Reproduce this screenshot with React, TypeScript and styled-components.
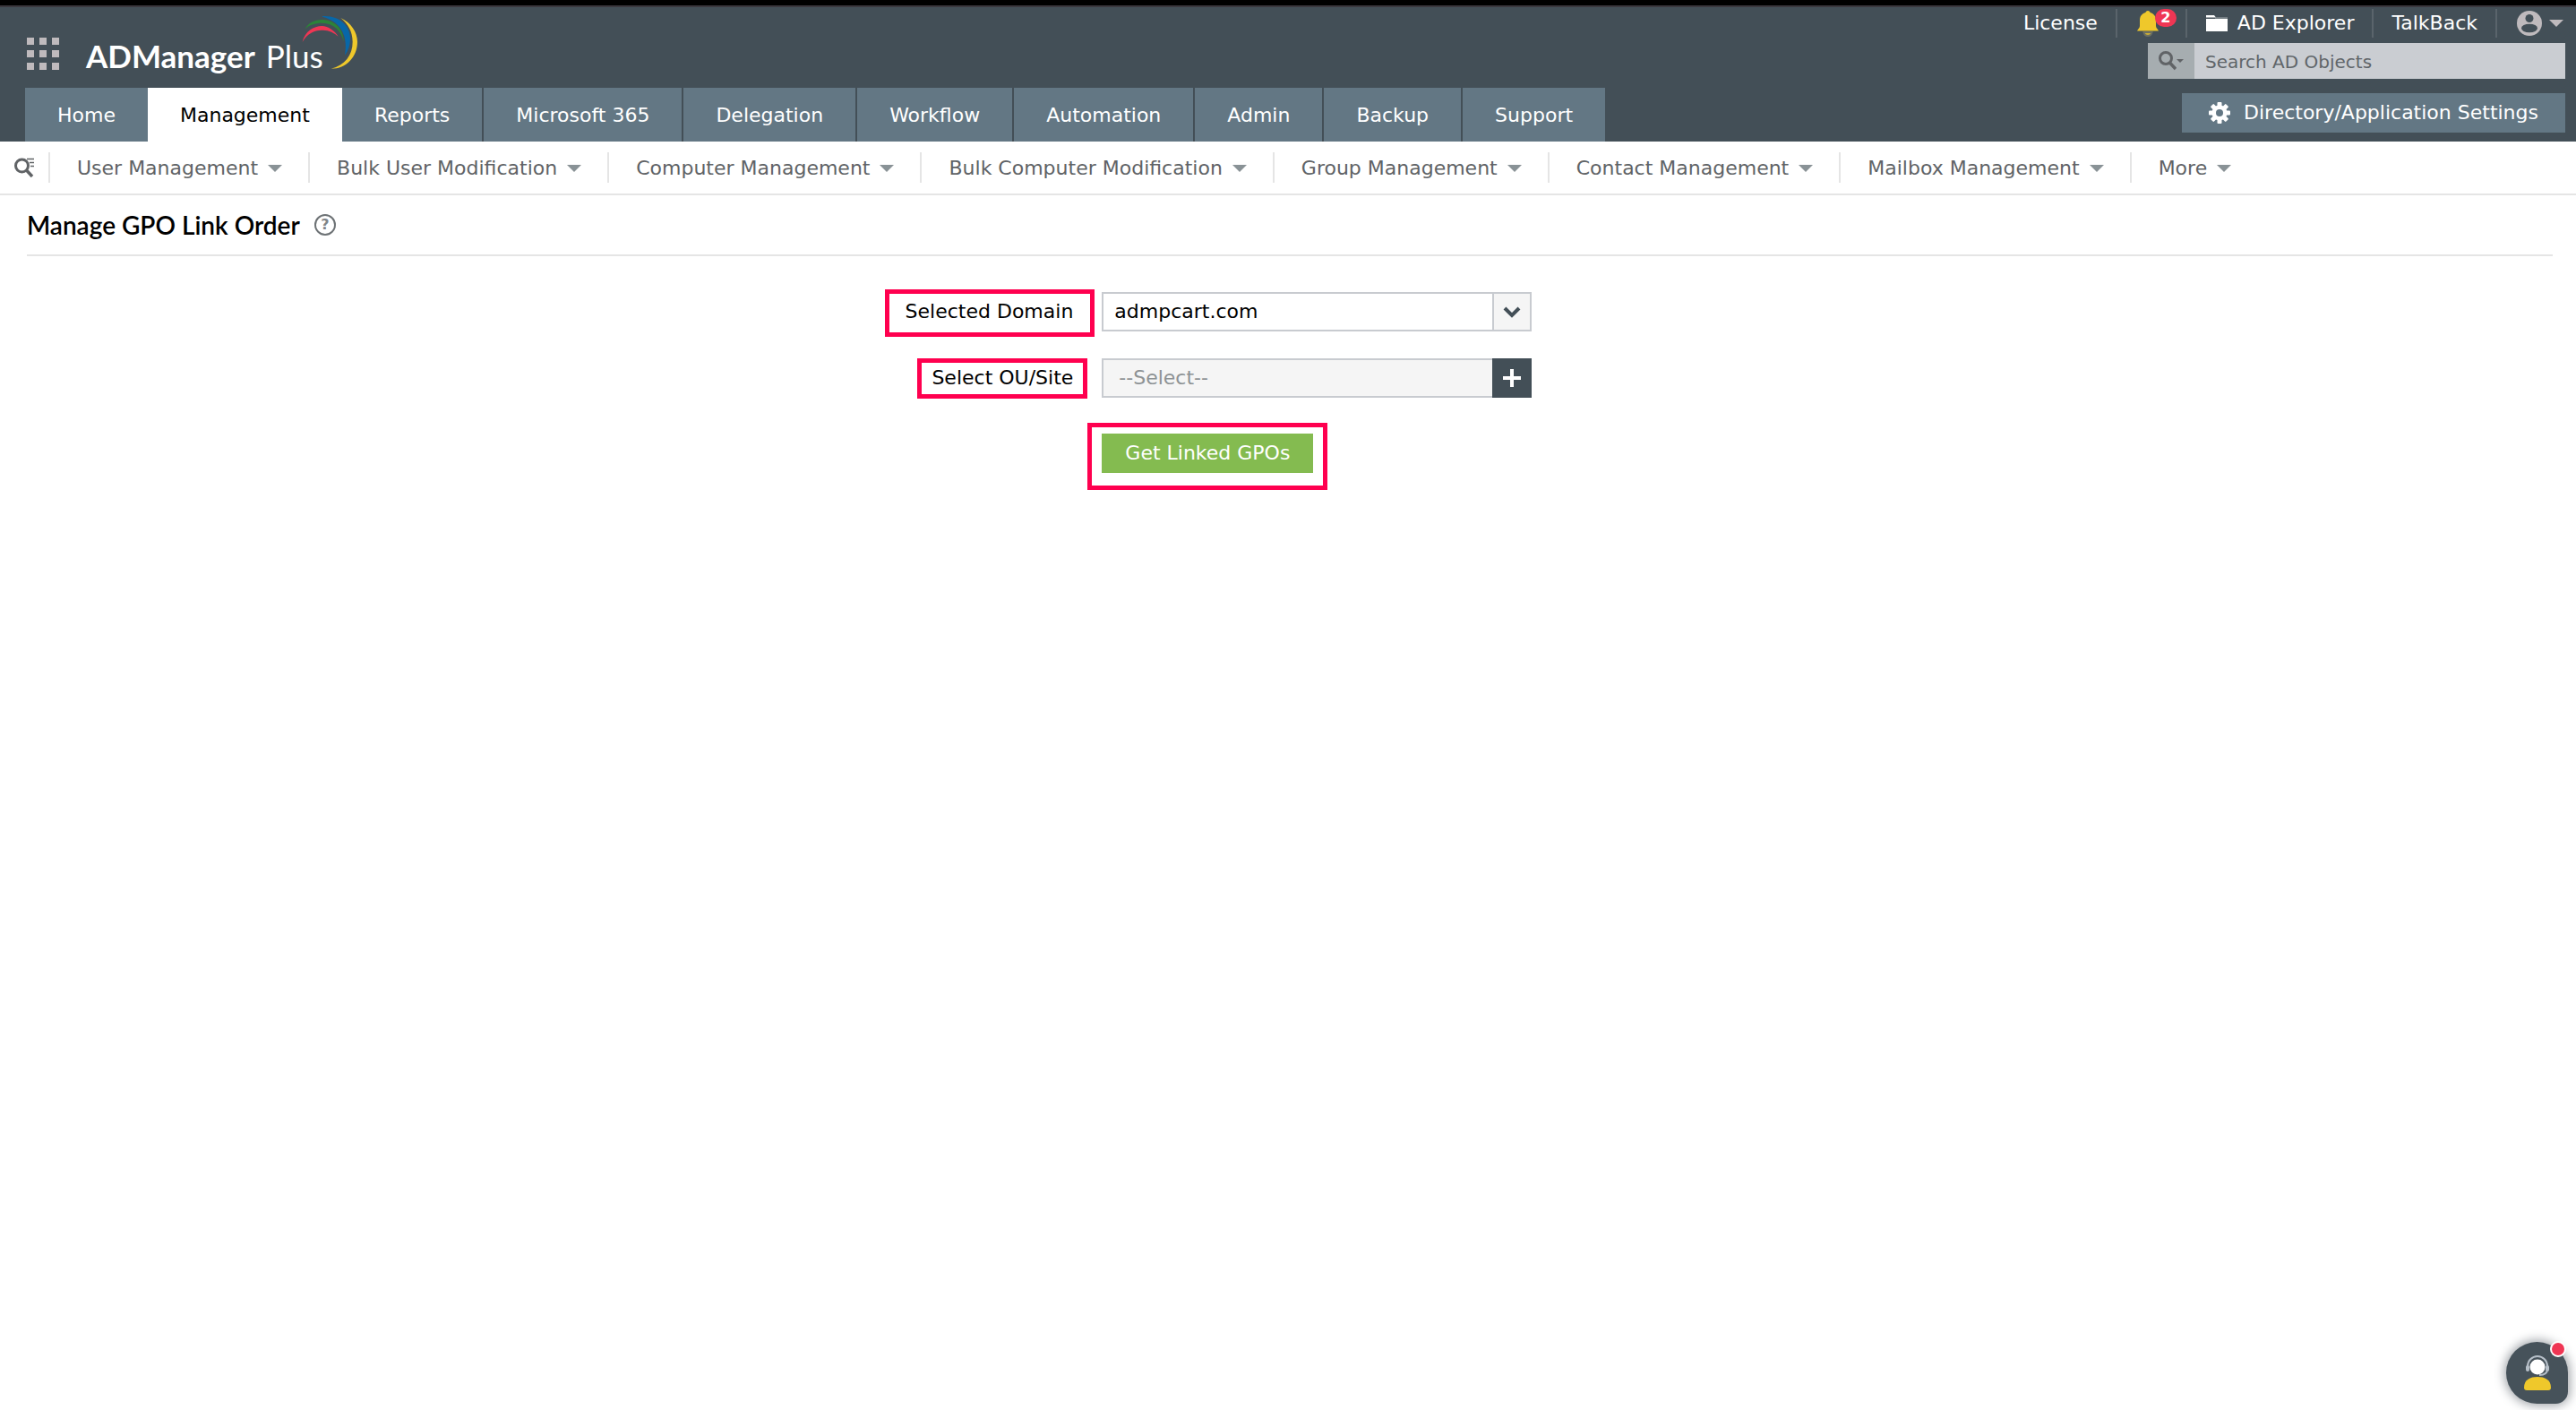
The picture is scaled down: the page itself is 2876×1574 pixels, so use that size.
import React from "react";
import styled, { createGlobalStyle } from "styled-components";

const GlobalStyle = createGlobalStyle`
  *, *::before, *::after { box-sizing: border-box; }
  body {
    margin: 0;
    background: #fff;
    color: #000;
    font: 22px/32px "DejaVu Sans", Verdana, sans-serif;
  }
  button, input, select { font: inherit; color: inherit; margin: 0; }
  a { color: inherit; text-decoration: none; }
`;

const Page = styled.div`
  min-height: 100vh;
`;

const Header = styled.header`
  display: flex;
  justify-content: space-between;
  background: #434f57;
  border-top: 6px solid #000;
  box-shadow: inset 0 2px #3b383e;
`;

const HeaderLeft = styled.div`
  display: flex;
  flex-direction: column;
  justify-content: space-between;
  padding-left: 28px;
`;

const Brand = styled.div`
  display: flex;
  align-items: flex-end;
  padding: 8px 0 0 2px;
`;

const AppsButton = styled.button`
  display: grid;
  grid-template-columns: repeat(3, 8px);
  gap: 6px;
  padding: 0;
  margin: 0 30px 4px 0;
  border: 0;
  background: none;
  cursor: pointer;
`;

const AppsDot = styled.span`
  height: 8px;
  background: #bfbabd;
`;

const Logo = styled.a`
  display: flex;
  align-items: flex-end;
  color: #fff;
  font: 700 35px/40px Lato, sans-serif;
`;

const LogoLight = styled.span`
  font-weight: 400;
  margin-left: 12px;
`;

const LogoArc = styled.svg`
  width: 64px;
  height: 64px;
  margin: 0 0 4px -25px;
`;

const Tabs = styled.nav`
  display: flex;
`;

const Tab = styled.a<{ $active: boolean; $divided: boolean }>`
  padding: 15px 36px 13px;
  border-left: ${(p) => (p.$divided ? "2px solid #434f57" : "0")};
  color: ${(p) => (p.$active ? "#000" : "#fff")};
  background: ${(p) => (p.$active ? "#fff" : "#637784")};
  white-space: nowrap;
`;

const HeaderRight = styled.div`
  display: flex;
  flex-direction: column;
  align-items: flex-end;
  padding: 4px 12px 10px 0;
`;

const UtilityBar = styled.div`
  display: flex;
  align-items: center;
  height: 32px;
  margin-bottom: 6px;
  margin-right: 2px;
`;

const UtilityItem = styled.a`
  display: flex;
  align-items: center;
  gap: 10px;
  height: 32px;
  padding: 0 20px;
  color: #fff;
  white-space: nowrap;
  &:not(:first-child) { border-left: 2px solid #5a646b; }
`;

const BellItem = styled(UtilityItem)`
  position: relative;
  padding-right: 28px;
`;

const Badge = styled.span`
  position: absolute;
  top: 0;
  left: 42px;
  width: 24px;
  height: 20px;
  border-radius: 10px;
  background: #ef3654;
  font-size: 16px;
  line-height: 20px;
  font-weight: 700;
  text-align: center;
`;

const AccountItem = styled(UtilityItem)`
  gap: 8px;
  padding: 0 0 0 22px;
`;

const Search = styled.form`
  display: flex;
  width: 466px;
  height: 40px;
  margin-bottom: 16px;
`;

const SearchScope = styled.button`
  display: flex;
  align-items: center;
  justify-content: center;
  width: 52px;
  padding: 0;
  border: 0;
  background: #a6adb0;
`;

const SearchInput = styled.input`
  flex: 1;
  min-width: 0;
  padding: 2px 12px 0;
  border: 0;
  background: #cacdd2;
  font-size: 20px;
  &::placeholder { color: #606569; opacity: 1; }
`;

const SettingsButton = styled.button`
  display: flex;
  align-items: center;
  gap: 15px;
  height: 44px;
  padding: 0 30px;
  border: 0;
  background: #637784;
  color: #fff;
  white-space: nowrap;
`;

const SubNav = styled.nav`
  display: flex;
  align-items: center;
  height: 60px;
  padding-left: 16px;
  border-bottom: 2px solid #e5e5e5;
`;

const IconButton = styled.button`
  display: flex;
  padding: 0 16px 0 0;
  border: 0;
  background: none;
`;

const SubNavItem = styled.button`
  display: flex;
  align-items: center;
  gap: 11px;
  height: 34px;
  padding: 2px 29px 0 30px;
  border: 0;
  border-left: 2px solid #e5e5e5;
  background: none;
  color: #606366;
  white-space: nowrap;
`;

const Caret = styled.span<{ $color?: string; $small?: boolean }>`
  border: ${(p) => (p.$small ? 4 : 8)}px solid transparent;
  border-top-color: ${(p) => p.$color ?? "#899296"};
  border-bottom: 0;
`;

const TitleBar = styled.div`
  display: flex;
  align-items: center;
  gap: 16px;
  height: 68px;
  margin: 0 26px 0 30px;
  border-bottom: 2px solid #e5e5e5;
`;

const Title = styled.h1`
  margin: 0;
  font: 600 28px/36px Lato, sans-serif;
`;

const HelpButton = styled.button`
  width: 24px;
  height: 24px;
  padding: 0;
  border: 2px solid #6d7275;
  border-radius: 50%;
  background: none;
  color: #808588;
  font-size: 16px;
  line-height: 20px;
  font-weight: 700;
`;

const Form = styled.form`
  display: grid;
  grid-template-columns: 5fr 7fr;
  align-items: center;
  row-gap: 30px;
  padding-top: 40px;
`;

const LabelCell = styled.div`
  display: flex;
  justify-content: flex-end;
`;

const FieldCell = styled.div`
  display: flex;
  padding-left: 32px;
`;

const ActionCell = styled(FieldCell)`
  grid-column: 2;
  padding-top: 10px;
`;

const Marked = styled.div<{ $inset: string }>`
  position: relative;
  &::after {
    content: "";
    position: absolute;
    inset: ${(p) => p.$inset};
    border: 5px solid #ff004f;
    pointer-events: none;
  }
`;

const SelectWrap = styled.div`
  display: grid;
  grid-template-columns: 1fr 44px;
  width: 480px;
  height: 44px;
`;

const DomainSelect = styled.select`
  grid-area: 1 / 1 / 2 / 3;
  appearance: none;
  padding: 0 56px 0 12px;
  border: 2px solid #c8cbd0;
  border-radius: 0;
  background: #fff;
`;

const SelectArrow = styled.span`
  grid-area: 1 / 2;
  display: flex;
  align-items: center;
  justify-content: center;
  border: 2px solid #c8cbd0;
  background: #f5f5f5;
  pointer-events: none;
`;

const OuInput = styled.input`
  min-width: 0;
  padding: 0 17px;
  border: 2px solid #c8cbd0;
  border-right: 0;
  background: #f5f5f5;
  &::placeholder { color: #8d9294; opacity: 1; }
`;

const AddButton = styled.button`
  display: flex;
  align-items: center;
  justify-content: center;
  padding: 0;
  border: 0;
  background: #434f57;
`;

const SubmitButton = styled.button`
  height: 44px;
  padding: 0 26px;
  border: 0;
  background: #84bb50;
  color: #fff;
  white-space: nowrap;
`;

const ChatButton = styled.button`
  position: fixed;
  right: 9px;
  bottom: 7px;
  display: flex;
  justify-content: center;
  width: 69px;
  height: 69px;
  padding: 14px 0 0;
  border: 0;
  border-radius: 35px 35px 14px 35px;
  background: #46525a;
  box-shadow: 0 0 12px 2px #9da1a6;
`;

const ChatDot = styled.span`
  position: absolute;
  top: -1px;
  right: 2px;
  width: 18px;
  height: 18px;
  border: 2px solid #fff;
  border-radius: 50%;
  background: #ef3654;
`;

const tabs = ["Home", "Management", "Reports", "Microsoft 365", "Delegation", "Workflow", "Automation", "Admin", "Backup", "Support"];
const activeTab = 1;

const menus = [
  "User Management",
  "Bulk User Modification",
  "Computer Management",
  "Bulk Computer Modification",
  "Group Management",
  "Contact Management",
  "Mailbox Management",
  "More",
];

const BellIcon = () => (
  <svg width="28" height="30" viewBox="0 0 28 30">
    <path d="M14 1c1.500 0 2.500 1 2.500 2C21 4.500 23 7 23 12v6c0 2 2 3.500 3 5.500H2C3 21.500 5 20 5 18v-6c0-5 2-7.500 6.500-9C11.500 2 12.500 1 14 1z" fill="#efc82b" />
    <path d="M9.500 25h9c-.5 2.500-2.200 4-4.500 4s-4-1.500-4.500-4z" fill="#c9ae36" stroke="#6b6f62" strokeWidth="2" />
  </svg>
);

const FolderIcon = () => (
  <svg width="26" height="20" viewBox="0 0 26 20">
    <path d="M1 1h9l2 2.500H1zM1 5h24v14H1z" fill="#fff" />
    <path d="M11 4h14" stroke="#a6adb0" />
  </svg>
);

const UserIcon = () => (
  <svg width="28" height="28" viewBox="0 0 28 28">
    <circle cx="14" cy="14" r="14" fill="#bfbabd" />
    <circle cx="14" cy="8.500" r="4.500" fill="#434f57" />
    <ellipse cx="14" cy="19.500" rx="9" ry="4.800" fill="#434f57" />
  </svg>
);

const GearIcon = () => (
  <svg width="24" height="24" viewBox="0 0 24 24">
    {[0, 45, 90, 135].map((a) => (
      <rect key={a} x="9.500" y="0" width="5" height="24" rx="1" fill="#fff" transform={`rotate(${a} 12 12)`} />
    ))}
    <circle cx="12" cy="12" r="8.500" fill="#fff" />
    <circle cx="12" cy="12" r="4" fill="#637784" />
  </svg>
);

export default function App() {
  return (
    <Page>
      <GlobalStyle />
      <Header>
        <HeaderLeft>
          <Brand>
            <AppsButton aria-label="Applications">
              {Array.from({ length: 9 }, (_, i) => (
                <AppsDot key={i} />
              ))}
            </AppsButton>
            <Logo href="#">
              ADManager<LogoLight>Plus</LogoLight>
              <LogoArc viewBox="48 12 192 192" aria-hidden="true">
                <path d="M53 111C60 75 92 57 118 57C140 58 160 72 173 92C160 80 140 70 118 71C92 72 68 82 53 111z" fill="#ef3654" />
                <path d="M61 68C72 45 98 35 122 36C165 38 192 72 191 110C184 76 160 47 118 47C96 47 76 53 61 68z" fill="#2c8339" />
                <path d="M120 24C175 20 214 55 213 100C213 120 207 140 195 155C205 100 190 45 120 26z" fill="#0867a8" />
                <path d="M181 30C215 45 237 78 237 110C237 160 200 200 149 200C195 188 221 155 221 110C221 75 205 50 181 30z" fill="#efc82b" />
              </LogoArc>
            </Logo>
          </Brand>
          <Tabs aria-label="Main">
            {tabs.map((t, i) => (
              <Tab
                key={t}
                href="#"
                $active={i === activeTab}
                $divided={i > activeTab + 1}
                aria-current={i === activeTab ? "page" : undefined}
              >
                {t}
              </Tab>
            ))}
          </Tabs>
        </HeaderLeft>
        <HeaderRight>
          <UtilityBar>
            <UtilityItem href="#">License</UtilityItem>
            <BellItem href="#" aria-label="Notifications">
              <BellIcon />
              <Badge>2</Badge>
            </BellItem>
            <UtilityItem href="#">
              <FolderIcon />
              AD Explorer
            </UtilityItem>
            <UtilityItem href="#">TalkBack</UtilityItem>
            <AccountItem href="#" aria-label="Account">
              <UserIcon />
              <Caret $color="#bfbabd" />
            </AccountItem>
          </UtilityBar>
          <Search role="search">
            <SearchScope type="button" aria-label="Search scope">
              <svg width="20" height="22" viewBox="0 0 20 22">
                <circle cx="8" cy="8" r="6.500" fill="none" stroke="#606366" strokeWidth="3" />
                <path d="M12 12.500L19 20" stroke="#606366" strokeWidth="3.500" />
              </svg>
              <Caret $small $color="#606366" />
            </SearchScope>
            <SearchInput type="search" placeholder="Search AD Objects" aria-label="Search AD Objects" />
          </Search>
          <SettingsButton>
            <GearIcon />
            Directory/Application Settings
          </SettingsButton>
        </HeaderRight>
      </Header>
      <SubNav aria-label="Management">
        <IconButton aria-label="Search menu">
          <svg width="22" height="22" viewBox="0 0 22 22">
            <circle cx="8.500" cy="9" r="7" fill="none" stroke="#606366" strokeWidth="3" />
            <path d="M13.500 14L20 21" stroke="#606366" strokeWidth="3.500" />
            <path d="M14 1.500h8M17 5.500h5M18 9.500h4" stroke="#606366" strokeWidth="1.500" />
          </svg>
        </IconButton>
        {menus.map((m) => (
          <SubNavItem key={m}>
            {m}
            <Caret />
          </SubNavItem>
        ))}
      </SubNav>
      <main>
        <TitleBar>
          <Title>Manage GPO Link Order</Title>
          <HelpButton aria-label="Help">?</HelpButton>
        </TitleBar>
        <Form>
          <LabelCell>
            <Marked $inset="-9px -24px -12px -23px">
              <label htmlFor="domain">Selected Domain</label>
            </Marked>
          </LabelCell>
          <FieldCell>
            <SelectWrap>
              <DomainSelect id="domain" defaultValue="admpcart.com">
                <option>admpcart.com</option>
              </DomainSelect>
              <SelectArrow>
                <svg width="20" height="13" viewBox="0 0 20 13">
                  <path d="M2 2l8 8 8-8" fill="none" stroke="#434f57" strokeWidth="4" />
                </svg>
              </SelectArrow>
            </SelectWrap>
          </FieldCell>
          <LabelCell>
            <Marked $inset="-6px -16px -7px -16px">
              <label htmlFor="ou">Select OU/Site</label>
            </Marked>
          </LabelCell>
          <FieldCell>
            <SelectWrap>
              <OuInput id="ou" placeholder="--Select--" />
              <AddButton type="button" aria-label="Add OU or site">
                <svg width="20" height="20" viewBox="0 0 20 20">
                  <path d="M10 0v20M0 10h20" stroke="#fff" strokeWidth="4" />
                </svg>
              </AddButton>
            </SelectWrap>
          </FieldCell>
          <ActionCell>
            <Marked $inset="-12px -16px -19px -16px">
              <SubmitButton type="button">Get Linked GPOs</SubmitButton>
            </Marked>
          </ActionCell>
        </Form>
      </main>
      <ChatButton aria-label="Chat with support">
        <svg width="34" height="42" viewBox="0 0 34 42">
          <circle cx="17" cy="14" r="8.500" fill="#fff" />
          <path d="M6 16v-3a11 11 0 0 1 22 0v3q0 7-9 7" fill="none" stroke="#b6bfc8" strokeWidth="2" />
          <rect x="4" y="12" width="4" height="7" rx="2" fill="#b6bfc8" />
          <rect x="26" y="12" width="4" height="7" rx="2" fill="#b6bfc8" />
          <path d="M2 37C2 28 9 25 17 25s15 3 15 12q0 3-3 3H5q-3 0-3-3z" fill="#efc82b" />
        </svg>
        <ChatDot />
      </ChatButton>
    </Page>
  );
}
